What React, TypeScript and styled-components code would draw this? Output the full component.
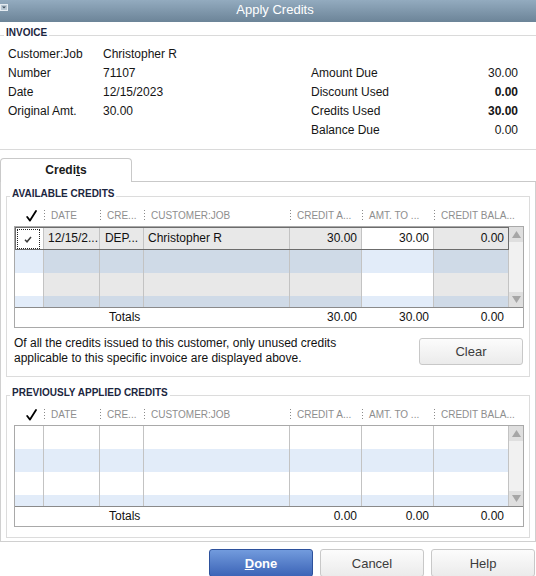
import styled, { createGlobalStyle } from 'styled-components'

const GlobalStyle = createGlobalStyle`
  html, body { margin: 0; padding: 0; }
  body {
    width: 536px;
    height: 576px;
    overflow: hidden;
    background: #fff;
    font-family: "Liberation Sans", Arial, sans-serif;
    font-size: 12px;
    color: #151515;
  }
  * { box-sizing: border-box; }
`

const COLS = '29px 56px 44px 146px 72px 72px 75px'

type Tone = 'sel' | 'blue' | 'grey' | 'white' | 'pale'

// [normal column, editable column]
const shades: Record<Tone, [string, string]> = {
  sel: ['#e8e8e8', '#ffffff'],
  blue: ['#cfdae7', '#e2ecf9'],
  grey: ['#e8e8e8', '#ffffff'],
  white: ['#ffffff', '#ffffff'],
  pale: ['#e2ecf9', '#e2ecf9'],
}

type RowData = { tone: Tone; cells?: string[] }

const available: RowData[] = [
  { tone: 'sel', cells: ['', '12/15/2...', 'DEP...', 'Christopher R', '30.00', '30.00', '0.00'] },
  { tone: 'blue' },
  { tone: 'grey' },
  { tone: 'blue' },
]

const previous: RowData[] = [
  { tone: 'white' },
  { tone: 'pale' },
  { tone: 'white' },
  { tone: 'pale' },
]

const headers = ['DATE', 'CRE...', 'CUSTOMER:JOB', 'CREDIT A...', 'AMT. TO ...', 'CREDIT BALA...']
const aligns = ['left', 'left', 'center', 'left', 'right', 'right', 'right']

const CheckMark = ({ small }: { small?: boolean }) =>
  small ? (
    <svg width="8" height="7" viewBox="0 0 8 7">
      <path d="M1 3.8 L3 5.8 L7 1" fill="none" stroke="#3a3a3a" strokeWidth="1.5" />
    </svg>
  ) : (
    <svg width="11" height="12" viewBox="0 0 11 12">
      <path d="M1.2 7 L4 10.6 L10 1" fill="none" stroke="#000" strokeWidth="1.8" strokeLinecap="round" strokeLinejoin="round" />
    </svg>
  )

const Arrow = ({ down }: { down?: boolean }) => (
  <svg width="9" height="7" viewBox="0 0 9 7">
    <polygon points={down ? '0,0 9,0 4.5,7' : '0,7 9,7 4.5,0'} fill="#a6a6a6" />
  </svg>
)

const CreditsTable = ({ rows, totals }: { rows: RowData[]; totals: string[] }) => (
  <>
    <HeadRow>
      <HeadCell>
        <CheckMark />
      </HeadCell>
      {headers.map((h) => (
        <HeadCell key={h} $sep>
          {h}
        </HeadCell>
      ))}
    </HeadRow>
    <Frame>
      <Body>
        <Rows>
          {rows.map((r, i) => (
            <Row key={i} $selected={r.tone === 'sel'}>
              {aligns.map((a, c) => {
                const bg = shades[r.tone][c === 0 || c === 5 ? 1 : 0]
                if (c === 0 && r.cells) {
                  return (
                    <CheckCell key={c} $bg={bg}>
                      <FocusBox>
                        <CheckMark small />
                      </FocusBox>
                    </CheckCell>
                  )
                }
                return (
                  <Cell key={c} $bg={bg} $align={a}>
                    {r.cells ? r.cells[c] : ''}
                  </Cell>
                )
              })}
            </Row>
          ))}
        </Rows>
        <Scroll>
          <ScrollArrow>
            <Arrow />
          </ScrollArrow>
          <ScrollArrow>
            <Arrow down />
          </ScrollArrow>
        </Scroll>
      </Body>
      <Totals>
        <TotalsLabel>Totals</TotalsLabel>
        {totals.map((t, i) => (
          <TotalsValue key={i}>{t}</TotalsValue>
        ))}
        <span />
      </Totals>
    </Frame>
  </>
)

export default function App() {
  return (
    <>
      <GlobalStyle />
      <Window>
        <TitleBar>
          <svg width="8" height="7" viewBox="0 0 8 7">
            <rect x="0.5" y="0.5" width="7" height="6" fill="#b9c8d4" stroke="#e4ebf1" />
            <polygon points="2,2.5 6,2.5 4,4.5" fill="#3f4f5f" />
          </svg>
          <Title>Apply Credits</Title>
        </TitleBar>

        <InvoiceBox>
          <Legend $inset={4}>INVOICE</Legend>
          <InvoiceGrid>
            <InfoList>
              <span>Customer:Job</span>
              <span>Christopher R</span>
              <span>Number</span>
              <span>71107</span>
              <span>Date</span>
              <span>12/15/2023</span>
              <span>Original Amt.</span>
              <span>30.00</span>
            </InfoList>
            <Amounts>
              <span>Amount Due</span>
              <Amount>30.00</Amount>
              <span>Discount Used</span>
              <Amount $bold>0.00</Amount>
              <span>Credits Used</span>
              <Amount $bold>30.00</Amount>
              <span>Balance Due</span>
              <Amount>0.00</Amount>
            </Amounts>
          </InvoiceGrid>
        </InvoiceBox>

        <TabBar>
          <Tab>
            Credi<u>t</u>s
          </Tab>
          <TabRest />
        </TabBar>

        <TabPanel>
          <Group>
            <Legend $inset={-4}>AVAILABLE CREDITS</Legend>
            <CreditsTable rows={available} totals={['30.00', '30.00', '0.00']} />
            <InfoRow>
              <Note>
                Of all the credits issued to this customer, only unused credits
                <br />
                applicable to this specific invoice are displayed above.
              </Note>
              <Button $h={27}>Clear</Button>
            </InfoRow>
          </Group>

          <Group $gap={10}>
            <Legend $inset={-4}>PREVIOUSLY APPLIED CREDITS</Legend>
            <CreditsTable rows={previous} totals={['0.00', '0.00', '0.00']} />
          </Group>
        </TabPanel>

        <Footer>
          <Button $primary $h={28}>
            <u>D</u>one
          </Button>
          <Button $h={28}>Cancel</Button>
          <Button $h={28}>Help</Button>
        </Footer>
      </Window>
    </>
  )
}

const Window = styled.div`
  width: 536px;
  height: 576px;
  display: flex;
  flex-direction: column;
  overflow: hidden;
`

const TitleBar = styled.div`
  height: 22px;
  flex-shrink: 0;
  display: flex;
  align-items: flex-start;
  padding-top: 4px;
  background: linear-gradient(#93abbf, #6c8498);
`

const Title = styled.div`
  flex: 1;
  text-align: center;
  padding-left: 6px;
  margin-top: -3px;
  font-size: 13px;
  line-height: 18px;
  color: #fff;
`

const Legend = styled.legend<{ $inset: number }>`
  margin-left: ${(p) => p.$inset}px;
  padding: 0 2px 5px;
  font-size: 10px;
  font-weight: bold;
  line-height: 12px;
  color: #1c2640;
`

const InvoiceBox = styled.fieldset`
  margin: 5px 0 0;
  padding: 0 0 10px;
  border: 0;
  border-top: 1px solid #dadada;
  border-bottom: 1px solid #dadada;
  min-width: 0;
`

const InvoiceGrid = styled.div`
  display: flex;
  justify-content: space-between;
`

const InfoList = styled.div`
  display: grid;
  grid-template-columns: 95px auto;
  grid-auto-rows: 19px;
  align-items: center;
  padding-left: 8px;
`

const Amounts = styled.div`
  display: grid;
  grid-template-columns: 1fr auto;
  grid-auto-rows: 19px;
  align-items: center;
  width: 207px;
  margin: 19px 18px 0 0;
`

const Amount = styled.span<{ $bold?: boolean }>`
  text-align: right;
  font-weight: ${(p) => (p.$bold ? 'bold' : 'normal')};
`

const TabBar = styled.div`
  display: flex;
  height: 24px;
  margin-top: 8px;
  flex-shrink: 0;
`

const Tab = styled.div`
  width: 132px;
  border: 1px solid #c9c9c9;
  border-bottom: none;
  border-radius: 4px 4px 0 0;
  text-align: center;
  font-weight: bold;
  line-height: 22px;
  color: #1a1a1a;
`

const TabRest = styled.div`
  flex: 1;
  border-bottom: 1px solid #c9c9c9;
`

const TabPanel = styled.div`
  border: 1px solid #d0d0d0;
  border-top: none;
  padding: 6px 5px 3px;
  flex-shrink: 0;
`

const Group = styled.fieldset<{ $gap?: number }>`
  margin: ${(p) => p.$gap ?? 0}px 0 0;
  padding: 0 5px 10px 7px;
  border: 1px solid #dcdcdc;
  min-width: 0;
`

const HeadRow = styled.div`
  display: grid;
  grid-template-columns: ${COLS};
  height: 21px;
  padding-left: 1px;
`

const HeadCell = styled.div<{ $sep?: boolean }>`
  display: flex;
  align-items: center;
  padding-left: ${(p) => (p.$sep ? 7 : 11)}px;
  font-size: 10px;
  color: #8e8e8e;
  white-space: nowrap;
  background-image: ${(p) =>
    p.$sep ? 'repeating-linear-gradient(to bottom, #8a8a8a 0 1px, transparent 1px 3px)' : 'none'};
  background-size: 1px 11px;
  background-position: 0 5px;
  background-repeat: no-repeat;
`

const Frame = styled.div`
  border: 1px solid #a9a9a9;
`

const Body = styled.div`
  display: flex;
  height: 80px;
`

const Rows = styled.div`
  width: 494px;
  overflow: hidden;
`

const Row = styled.div<{ $selected?: boolean }>`
  display: grid;
  grid-template-columns: ${COLS};
  height: 23px;
  outline: ${(p) => (p.$selected ? '1px solid #6c6c6c' : 'none')};
  outline-offset: -1px;
`

const Cell = styled.div<{ $bg: string; $align: string }>`
  background: ${(p) => p.$bg};
  border-right: 1px solid #c3c3c3;
  padding: 0 4px;
  line-height: 23px;
  text-align: ${(p) => p.$align};
  white-space: nowrap;
  overflow: hidden;
  color: #111;
`

const CheckCell = styled.div<{ $bg: string }>`
  background: ${(p) => p.$bg};
  border-right: 1px solid #c3c3c3;
  display: flex;
  padding: 2px 3px 1px 2px;
`

const FocusBox = styled.div`
  flex: 1;
  border: 1px dotted #222;
  display: flex;
  align-items: center;
  justify-content: center;
  padding-right: 1px;
`

const Scroll = styled.div`
  width: 14px;
  display: flex;
  flex-direction: column;
  justify-content: space-between;
  background: #f1f1f1;
`

const ScrollArrow = styled.div`
  height: 15px;
  background: #dfdfdf;
  display: flex;
  align-items: center;
  justify-content: center;
`

const Totals = styled.div`
  display: grid;
  grid-template-columns: 275px 72px 72px 75px 14px;
  border-top: 1px solid #8a8a8a;
  line-height: 19px;
  color: #111;
`

const TotalsLabel = styled.span`
  padding-left: 94px;
`

const TotalsValue = styled.span`
  text-align: right;
  padding-right: 5px;
`

const InfoRow = styled.div`
  display: flex;
  justify-content: space-between;
  align-items: center;
  margin-top: 8px;
  padding-right: 1px;
`

const Note = styled.div`
  line-height: 15px;
  color: #111;
`

const Button = styled.button<{ $primary?: boolean; $h: number }>`
  width: 104px;
  height: ${(p) => p.$h}px;
  border-radius: 3px;
  font-family: inherit;
  font-size: 13px;
  font-weight: ${(p) => (p.$primary ? 'bold' : 'normal')};
  color: ${(p) => (p.$primary ? '#fff' : '#3c3c3c')};
  border: 1px solid ${(p) => (p.$primary ? '#2d519c' : '#c8c8c8')};
  background: ${(p) =>
    p.$primary ? 'linear-gradient(#729bdd, #3c64b7)' : 'linear-gradient(#fcfcfc, #ebebeb)'};
  padding: 0;
  cursor: pointer;
`

const Footer = styled.div`
  display: flex;
  justify-content: flex-end;
  gap: 7px;
  margin-top: 7px;
  padding-right: 1px;
  flex-shrink: 0;
`
